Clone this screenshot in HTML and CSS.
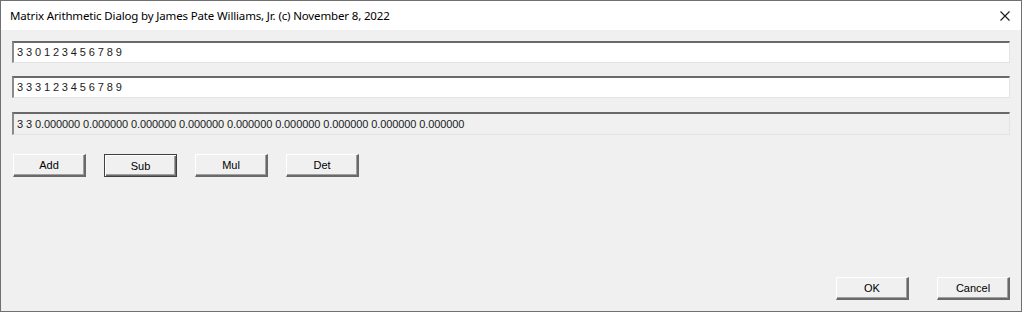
FILE: index.html
```html
<!DOCTYPE html>
<html lang="en">
<head>
  <meta charset="UTF-8">
  <title>Matrix Arithmetic Dialog</title>
  <link rel="stylesheet" href="styles.css">
</head>
<body>
  <div class="window">
    <!-- Title Bar -->
    <div class="titlebar">
      <span class="title">Matrix Arithmetic Dialog by James Pate Williams, Jr. (c) November 8, 2022</span>
      <button class="close-btn" aria-label="Close">
        <svg width="10" height="10" viewBox="0 0 10 10">
          <path d="M0.5 0.5 L9.5 9.5 M9.5 0.5 L0.5 9.5" stroke="#1a1a1a" stroke-width="1.1" fill="none"/>
        </svg>
      </button>
    </div>

    <!-- Client Area -->
    <div class="client">
      <div class="edit first">3 3 0 1 2 3 4 5 6 7 8 9</div>
      <div class="edit second">3 3 3 1 2 3 4 5 6 7 8 9</div>
      <div class="edit result">3 3 0.000000 0.000000 0.000000 0.000000 0.000000 0.000000 0.000000 0.000000 0.000000</div>

      <div class="ops">
        <button class="btn">Add</button>
        <button class="btn default">Sub</button>
        <button class="btn">Mul</button>
        <button class="btn">Det</button>
      </div>

      <div class="footer">
        <button class="btn">OK</button>
        <button class="btn">Cancel</button>
      </div>
    </div>
  </div>
</body>
</html>
```

FILE: styles.css
```css
/* General Styles */
body {
  margin: 0;
  padding: 0;
  background-color: #f0f0f0;
  font-family: "Liberation Sans", Arial, sans-serif;
}

.window {
  width: 1022px;
  height: 312px;
  box-sizing: border-box;
  border: 1px solid #707070;
  display: flex;
  flex-direction: column;
  background-color: #f0f0f0;
}

/* Title Bar */
.titlebar {
  height: 29px;
  flex-shrink: 0;
  background-color: #ffffff;
  display: flex;
  align-items: center;
  justify-content: space-between;
  padding-left: 9px;
}

.title {
  font-family: "Noto Sans", "Open Sans", sans-serif;
  font-size: 11.5px;
  color: #000000;
  letter-spacing: -0.15px;
}

.close-btn {
  width: 32px;
  height: 29px;
  border: none;
  background: transparent;
  padding: 0;
  display: flex;
  align-items: center;
  justify-content: center;
}

/* Client Area */
.client {
  flex: 1;
  display: flex;
  flex-direction: column;
  padding: 11px 11px 11px 11px;
}

.edit {
  height: 22px;
  box-sizing: border-box;
  border-top: 2px solid #696969;
  border-left: 2px solid #8a8a8a;
  border-bottom: 1px solid #e3e3e3;
  border-right: 1px solid #e3e3e3;
  background-color: #ffffff;
  font-size: 11px;
  line-height: 19px;
  padding-left: 3px;
  color: #1a1a1a;
  letter-spacing: -0.1px;
  white-space: nowrap;
}

.edit.second {
  margin-top: 13px;
}

.edit.result {
  margin-top: 14px;
  height: 23px;
  line-height: 20px;
  background-color: #f0f0f0;
}

/* Buttons */
.ops {
  display: flex;
  gap: 18px;
  margin-top: 19px;
  padding-left: 1px;
}

.btn {
  width: 73px;
  height: 23px;
  box-sizing: border-box;
  background-color: #f0f0f0;
  border-top: 1px solid #ffffff;
  border-left: 1px solid #ffffff;
  border-right: 2px solid #696969;
  border-bottom: 2px solid #696969;
  box-shadow: inset -1px -1px 0 #a0a0a0;
  font-family: "Liberation Sans", Arial, sans-serif;
  font-size: 11px;
  color: #000000;
  padding: 0;
}

.btn.default {
  border: 1px solid #404040;
  box-shadow: inset 1px 1px 0 #ffffff, inset -1px -1px 0 #696969, inset -2px -2px 0 #a0a0a0;
}

.footer {
  margin-top: auto;
  display: flex;
  justify-content: flex-end;
  gap: 28px;
}
```
